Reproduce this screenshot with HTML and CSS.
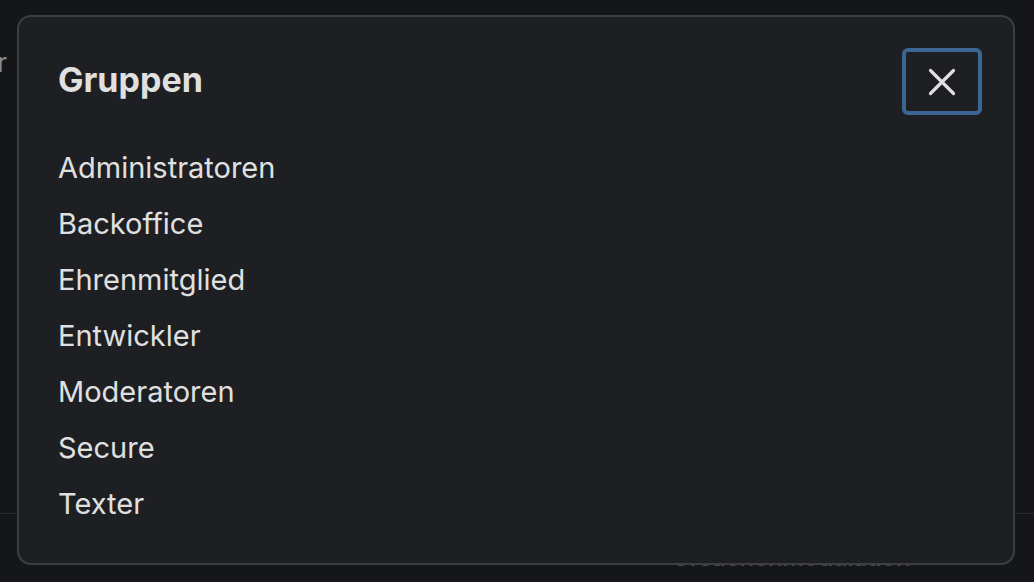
FILE: index.html
```html
<!DOCTYPE html>
<html>
<head>
  <title>Gruppen</title>
  <link rel="stylesheet" href="styles.css">
</head>
<body>
  <div class="page">
    <div class="page-label"><span>Mitglieder</span></div>
    <div class="page-rule"></div>
    <div class="page-footer">Ursachenmodulation</div>
  </div>

  <div class="modal" role="dialog" aria-labelledby="modalTitle">
    <div class="modal-header">
      <h2 id="modalTitle">Gruppen</h2>
      <button class="close-button" aria-label="Schließen">
        <svg width="28" height="28" viewBox="0 0 28 28" fill="none" stroke="currentColor" stroke-width="3.2" stroke-linecap="round">
          <path d="M2.5 2.5 L25.5 25.5 M25.5 2.5 L2.5 25.5"/>
        </svg>
      </button>
    </div>
    <ul class="group-list">
      <li>Administratoren</li>
      <li>Backoffice</li>
      <li>Ehrenmitglied</li>
      <li>Entwickler</li>
      <li>Moderatoren</li>
      <li>Secure</li>
      <li>Texter</li>
    </ul>
  </div>
</body>
</html>
```

FILE: styles.css
```css
:root {
  --page-background: #151619;
  --modal-background: #1e1f23;
  --border-color: #3d3e42;
  --text-color: #e0e0e0;
  --muted-text: #4a4b4f;
  --focus-color: #3b6694;
}

html, body {
  height: 100%;
}

body {
  margin: 0;
  overflow: hidden;
  font-family: Inter, 'Noto Sans', sans-serif;
  background-color: var(--page-background);
  color: var(--text-color);
}

.page {
  display: flex;
  flex-direction: column;
  height: 100%;
}

.page-label {
  display: flex;
  justify-content: flex-end;
  width: 7px;
  margin-top: 47px;
  overflow: hidden;
  white-space: nowrap;
  font-size: 26px;
  line-height: 31px;
  color: #8a8b8f;
}

.page-rule {
  margin-top: 435px;
  border-top: 1px solid #2a2b2f;
}

.page-footer {
  margin: 29px 0 0 672px;
  font-size: 24px;
  font-weight: 500;
  line-height: 29px;
  color: var(--muted-text);
}

.modal {
  position: absolute;
  left: 17px;
  top: 15px;
  width: 998px;
  height: 550px;
  box-sizing: border-box;
  padding: 31px 31px 0 39px;
  background-color: var(--modal-background);
  border: 2px solid var(--border-color);
  border-radius: 14px;
}

.modal-header {
  display: flex;
  justify-content: space-between;
  align-items: flex-start;
}

h2 {
  margin: 12px 0 0;
  font-size: 34px;
  font-weight: 650;
  line-height: 1.2;
}

.close-button {
  display: flex;
  align-items: center;
  justify-content: center;
  width: 80px;
  height: 67px;
  padding: 0;
  background: transparent;
  color: var(--text-color);
  border: 4px solid var(--focus-color);
  border-radius: 6px;
  cursor: pointer;
}

.group-list {
  list-style: none;
  margin: 25px 0 0;
  padding: 0;
  display: flex;
  flex-direction: column;
}

.group-list li {
  font-size: 29px;
  line-height: 56px;
}
```
